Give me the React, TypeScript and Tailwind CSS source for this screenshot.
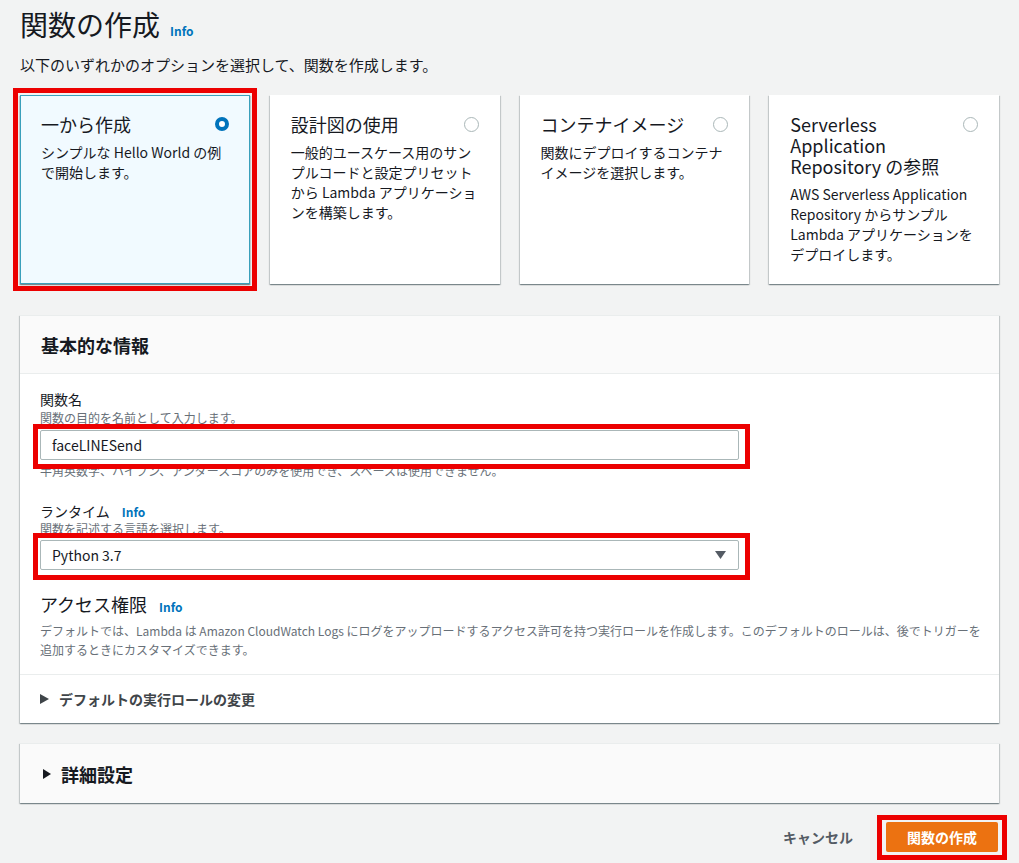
import React from "react";

const cardShadow =
  "shadow-[0_1px_1px_0_rgba(0,28,36,0.3),1px_1px_1px_0_rgba(0,28,36,0.15),-1px_1px_1px_0_rgba(0,28,36,0.15)]";

function Radio({ checked }: { checked: boolean }) {
  return checked ? (
    <span className="mt-[3px] block h-[14px] w-[14px] shrink-0 rounded-full border-[4px] border-[#0073bb] bg-white" />
  ) : (
    <span className="mt-[3px] block h-[15px] w-[15px] shrink-0 rounded-full border border-[#aab7b8] bg-white" />
  );
}

function Card({
  title,
  desc,
  selected,
}: {
  title: string[];
  desc: string[];
  selected?: boolean;
}) {
  return (
    <div
      className={
        selected
          ? `h-full border border-[#3a9fbb] bg-[#f1faff] px-[20px] pb-[19px] pt-[18px] ${cardShadow}`
          : `h-full border border-transparent bg-white px-[20px] pb-[19px] pt-[18px] ${cardShadow}`
      }
    >
      <div className="flex items-start justify-between gap-[8px]">
        <div className="text-[18px] leading-[21px] text-[#16191f]">
          {title.map((t, i) => (
            <div key={i} className="whitespace-nowrap">
              {t}
            </div>
          ))}
        </div>
        <Radio checked={!!selected} />
      </div>
      <div className="mt-[7px] text-[14px] leading-[20px] text-[#16191f]">
        {desc.map((t, i) => (
          <div key={i} className="whitespace-nowrap">
            {t}
          </div>
        ))}
      </div>
    </div>
  );
}

function RightTriangle({ w, h, color }: { w: number; h: number; color: string }) {
  return (
    <svg width={w} height={h} viewBox={`0 0 ${w} ${h}`} className="shrink-0">
      <polygon points={`0,0 ${w},${h / 2} 0,${h}`} fill={color} />
    </svg>
  );
}

export default function App() {
  return (
    <div className="min-h-screen w-full bg-[#f2f3f3] px-[20px] font-['Noto_Sans_CJK_JP',sans-serif] text-[#16191f]">
      {/* Title */}
      <div className="flex items-baseline gap-[10px] pt-[6px]">
        <h1 className="text-[28px] font-normal leading-[36px]">関数の作成</h1>
        <span className="text-[12px] font-bold text-[#0073bb]">Info</span>
      </div>
      <p className="mt-[13px] text-[15px] leading-[20px]">
        以下のいずれかのオプションを選択して、関数を作成します。
      </p>

      {/* Option cards */}
      <div className="mt-[20px] grid grid-cols-4 gap-[20px]">
        <div className="relative">
          <Card
            selected
            title={["一から作成"]}
            desc={["シンプルな Hello World の例", "で開始します。"]}
          />
          <span className="pointer-events-none absolute -inset-[7px] border-[5px] border-[#ec0000]" />
        </div>
        <Card
          title={["設計図の使用"]}
          desc={[
            "一般的ユースケース用のサン",
            "プルコードと設定プリセット",
            "から Lambda アプリケーショ",
            "ンを構築します。",
          ]}
        />
        <Card
          title={["コンテナイメージ"]}
          desc={["関数にデプロイするコンテナ", "イメージを選択します。"]}
        />
        <Card
          title={["Serverless", "Application", "Repository の参照"]}
          desc={[
            "AWS Serverless Application",
            "Repository からサンプル",
            "Lambda アプリケーションを",
            "デプロイします。",
          ]}
        />
      </div>

      {/* Basic info panel */}
      <div className={`mt-[31px] border-t border-[#eaeded] bg-white ${cardShadow}`}>
        <div className="flex h-[58px] items-center border-b border-[#eaeded] bg-[#fafafa] px-[21px]">
          <h2 className="text-[18px] font-bold leading-[20px]">基本的な情報</h2>
        </div>

        <div className="px-[20px] pb-[15px] pt-[15px]">
          {/* Function name */}
          <div className="text-[14px] leading-[20px]">関数名</div>
          <div className="mt-px text-[12px] leading-[16px] text-[#687078]">
            関数の目的を名前として入力します。
          </div>
          <div className="relative mt-[4px] w-[699px]">
            <div className="flex h-[30px] items-center rounded-[2px] border border-[#aab7b8] bg-white px-[11px] text-[14px] text-[#16191f]">
              faceLINESend
            </div>
            <span className="pointer-events-none absolute -bottom-[9px] -left-[7px] -right-[11px] -top-[6px] border-[5px] border-[#ec0000]" />
          </div>
          <div className="mt-[3px] text-[12px] leading-[16px] text-[#687078]">
            半角英数字、ハイフン、アンダースコアのみを使用でき、スペースは使用できません。
          </div>

          {/* Runtime */}
          <div className="mt-[22px] flex items-baseline gap-[12px]">
            <span className="text-[14px] leading-[20px]">ランタイム</span>
            <span className="text-[12px] font-bold text-[#0073bb]">Info</span>
          </div>
          <div className="text-[12px] leading-[16px] text-[#687078]">
            関数を記述する言語を選択します。
          </div>
          <div className="relative mt-[3px] w-[699px]">
            <div className="flex h-[30px] items-center justify-between rounded-[2px] border border-[#aab7b8] bg-white pl-[11px] pr-[12px] text-[14px] text-[#16191f]">
              <span>Python 3.7</span>
              <svg width="11" height="8" viewBox="0 0 11 8">
                <polygon points="0,0 11,0 5.5,8" fill="#545b64" />
              </svg>
            </div>
            <span className="pointer-events-none absolute -bottom-[10px] -left-[7px] -right-[11px] -top-[7px] border-[5px] border-[#ec0000]" />
          </div>

          {/* Access permissions */}
          <div className="mt-[24px] flex items-baseline gap-[12px]">
            <span className="text-[18px] leading-[20px]">アクセス権限</span>
            <span className="text-[12px] font-bold text-[#0073bb]">Info</span>
          </div>
          <div className="mt-[5px] text-[12px] leading-[19px] text-[#687078]">
            <div className="whitespace-nowrap">
              デフォルトでは、Lambda は Amazon CloudWatch Logs にログをアップロードするアクセス許可を持つ実行ロールを作成します。このデフォルトのロールは、後でトリガーを
            </div>
            <div className="whitespace-nowrap">追加するときにカスタマイズできます。</div>
          </div>
        </div>

        <div className="flex h-[49px] items-center gap-[10px] border-t border-[#eaeded] px-[20px]">
          <RightTriangle w={9} h={10} color="#3f4549" />
          <span className="text-[14px] font-bold leading-[20px] text-[#3f4549]">
            デフォルトの実行ロールの変更
          </span>
        </div>
      </div>

      {/* Advanced settings */}
      <div
        className={`mt-[20px] flex h-[60px] items-center gap-[10px] border-t border-[#eaeded] bg-[#fafafa] px-[23px] ${cardShadow}`}
      >
        <RightTriangle w={8} h={10} color="#16191f" />
        <span className="text-[18px] font-bold leading-[20px]">詳細設定</span>
      </div>

      {/* Footer */}
      <div className="mt-[19px] flex items-center justify-end gap-[33px] pr-px">
        <span className="text-[14px] font-bold text-[#545b64]">キャンセル</span>
        <div className="relative">
          <div className="flex h-[30px] w-[112px] items-center justify-center rounded-[2px] bg-[#ec7211] text-[14px] font-bold text-white">
            関数の作成
          </div>
          <span className="pointer-events-none absolute -bottom-[8px] -left-[9px] -right-[9px] -top-[7px] border-[5px] border-[#ec0000]" />
        </div>
      </div>
    </div>
  );
}
